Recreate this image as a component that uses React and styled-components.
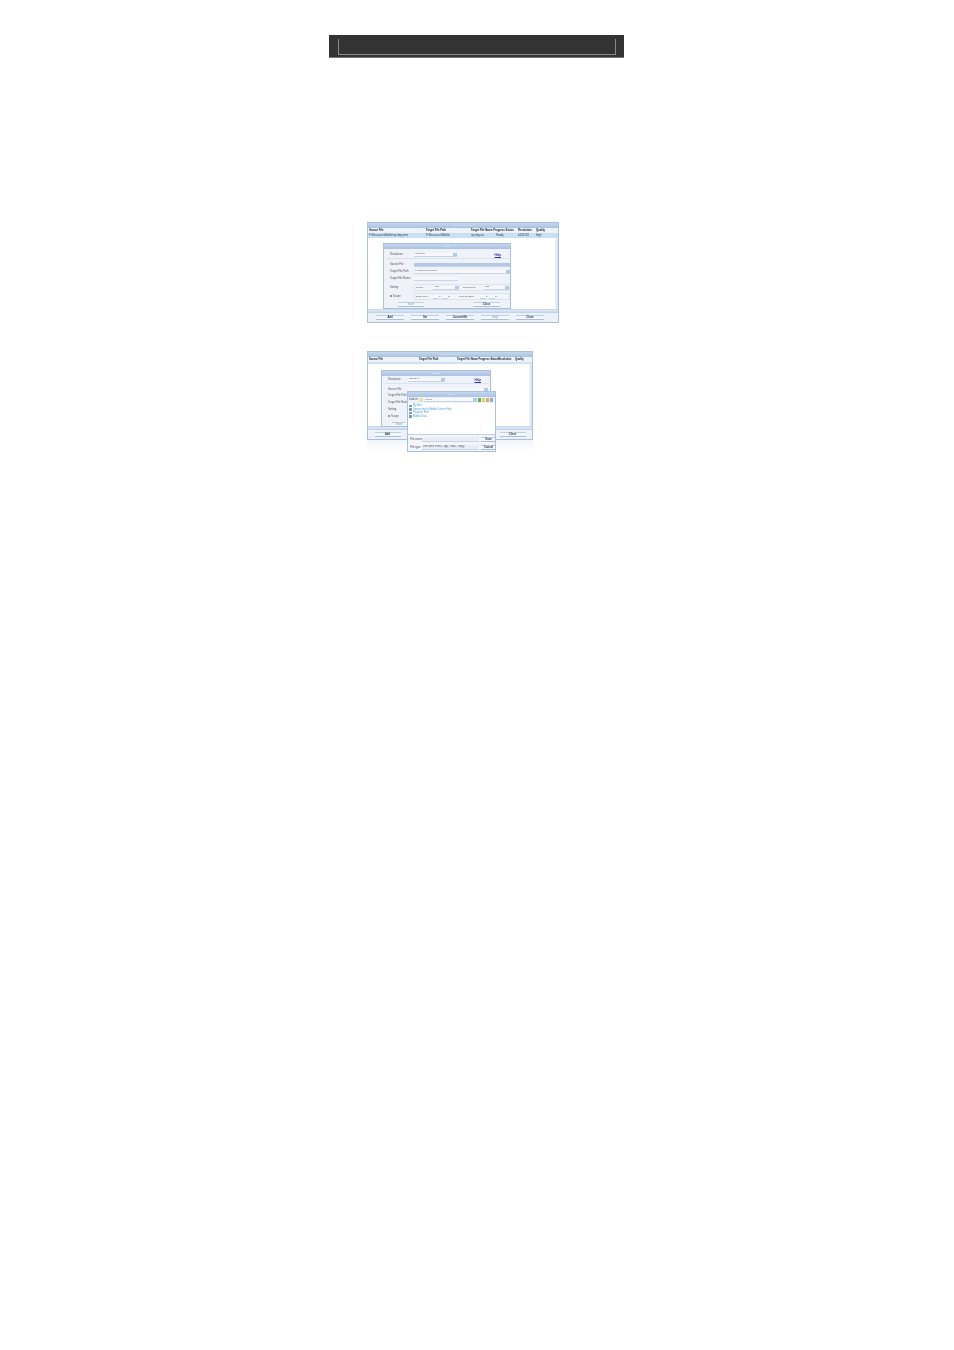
import React from "react";
import styled, { createGlobalStyle } from "styled-components";

const Global = createGlobalStyle`
  html, body { margin: 0; padding: 0; background: #fff; }
  body { font-family: "Liberation Sans", Arial, sans-serif; }
`;

const Page = styled.div`
  width: 954px;
  height: 1350px;
  padding-top: 35px;
  box-sizing: border-box;
  overflow: hidden;
`;

const Banner = styled.div`
  width: 295px;
  height: 23px;
  margin-left: 329px;
  padding: 4px 8px 4px 9px;
  box-sizing: border-box;
  background: #333;
  border-bottom: 1px solid #777;
`;

const BannerFrame = styled.div`
  height: 15px;
  border: 1px solid #8a8a8a;
  border-top: 0;
`;

const Shot = styled.figure`
  position: relative;
  margin: ${(p) => p.$top}px 0 0 367px;
  width: ${(p) => p.$w}px;
  height: ${(p) => p.$h}px;
  filter: blur(0.4px);
`;

const Win = styled.div`
  display: flex;
  flex-direction: column;
  width: ${(p) => p.$w}px;
  height: ${(p) => p.$h}px;
  box-sizing: border-box;
  background: #e9eff7;
  border: 1px solid #a9c0de;
  color: #334;
  font-size: 3px;
  line-height: 4px;
  white-space: nowrap;
  overflow: hidden;
`;

const Title = styled.div`
  flex: none;
  height: 5px;
  background: linear-gradient(#c6d7ed, #a9c1e1);
  color: #e6eef8;
  font-size: 2.4px;
  line-height: 5px;
  text-align: center;
`;

const Header = styled.div`
  flex: none;
  display: grid;
  grid-template-columns: ${(p) => p.$cols};
  height: 5px;
  padding-left: 1px;
  background: #eef3fa;
  font-weight: 700;
  font-size: ${(p) => p.$size || 2.7}px;
  line-height: 5px;
  color: #223;
  overflow: hidden;
`;

const Row = styled(Header)`
  background: #c9e0f4;
  font-weight: 400;
  color: #345;
`;

const Stripe = styled.div`
  flex: none;
  height: 2px;
  background: #cfe3f5;
`;

const Body = styled.div`
  flex: 1;
  display: flex;
  justify-content: flex-end;
  background: #fff;
`;

const VScroll = styled.div`
  width: 3px;
  background: linear-gradient(90deg, #f4f7fb, #d3e0ef);
`;

const HScroll = styled.div`
  flex: none;
  height: 4px;
  background: linear-gradient(#e4ecf6, #b9cfe8);
  border-top: 1px solid #c8d7e9;
  box-sizing: border-box;
`;

const Footer = styled.div`
  flex: none;
  display: flex;
  justify-content: ${(p) => p.$justify || "flex-start"};
  align-items: center;
  gap: ${(p) => p.$gap || 0}px;
  height: 9px;
  padding: 0 ${(p) => p.$pad || 8}px;
  background: #edf2f9;
`;

const Btn = styled.div`
  flex: none;
  width: ${(p) => p.$w || 28}px;
  height: 5px;
  box-sizing: border-box;
  background: #f4f7fb;
  border-top: 1px solid #bdd0e8;
  border-bottom: 1px solid #a7c0e0;
  font-size: 2.7px;
  font-weight: 700;
  line-height: 3px;
  text-align: center;
  color: ${(p) => (p.$dim ? "#9db0c8" : "#334")};
`;

const Dialog = styled(Win)`
  position: absolute;
  left: ${(p) => p.$x}px;
  top: ${(p) => p.$y}px;
  background: #eff3f9;
`;

const Form = styled.div`
  flex: 1;
  display: flex;
  flex-direction: column;
  padding: ${(p) => p.$top || 3}px 1px 0 6px;
`;

const Line = styled.div`
  flex: none;
  display: flex;
  align-items: center;
  height: ${(p) => p.$h || 4}px;
  margin-bottom: ${(p) => p.$gap || 2}px;
`;

const Label = styled.span`
  flex: none;
  width: ${(p) => p.$w || 23}px;
  font-size: 2.7px;
  color: #556;
`;

const Field = styled.div`
  flex: none;
  display: flex;
  justify-content: space-between;
  align-items: center;
  width: ${(p) => p.$w}px;
  height: 4px;
  padding-left: 1px;
  box-sizing: border-box;
  background: ${(p) => p.$fill || "#f6f8fb"};
  border-bottom: 1px solid #c6d4e6;
  font-size: 2.5px;
  line-height: 4px;
  color: #556;
  overflow: hidden;
`;

const Caret = styled.i`
  flex: none;
  width: 4px;
  height: 4px;
  background: #b3c9e3;
`;

const Help = styled.span`
  margin-left: auto;
  margin-right: 8px;
  font-size: 3px;
  font-weight: 700;
  color: #33339a;
  text-decoration: underline;
  text-decoration-thickness: 0.3px;
`;

const Divider = styled.div`
  flex: none;
  height: 1px;
  background: #d9e3ef;
  margin: 0 0 4px -3px;
`;

const Group = styled.div`
  flex: none;
  display: flex;
  align-items: center;
  width: ${(p) => p.$w}px;
  height: 7px;
  padding-left: 1px;
  box-sizing: border-box;
  background: #f1f4f9;
  border: 1px solid #dbe3ee;
`;

const Check = styled.i`
  display: inline-block;
  width: 2px;
  height: 2px;
  margin-right: 1px;
  box-sizing: border-box;
  border: 0.5px solid #99a;
  background: #fff;
`;

const Spacer = styled.div`
  flex: none;
  width: ${(p) => p.$w}px;
`;

const DlgFoot = styled.div`
  flex: none;
  display: flex;
  justify-content: space-between;
  padding: 0 ${(p) => p.$right || 9}px 0 ${(p) => p.$left || 8}px;
`;

const Tiny = styled.span`
  flex: none;
  font-size: 2.4px;
  color: #556;
  margin-left: ${(p) => p.$ml || 0}px;
  width: ${(p) => (p.$w ? `${p.$w}px` : "auto")};
`;

const Look = styled.div`
  flex: none;
  display: flex;
  align-items: center;
  gap: 1px;
  height: 6px;
  padding: 0 1px;
  background: #edf2f9;
  font-size: 2.6px;
`;

const Folder = styled.i`
  flex: none;
  width: 4px;
  height: 4px;
  border-radius: 50%;
  background: #efe09a;
`;

const Tool = styled.i`
  flex: none;
  width: 3px;
  height: 4px;
  background: ${(p) => p.$c};
`;

const Files = styled.div`
  flex: 1;
  display: flex;
  flex-direction: column;
  padding: 1px 0 0 1px;
  background: #fff;
  border-bottom: 1px solid #bdd0e8;
`;

const FileRow = styled.div`
  display: flex;
  align-items: center;
  gap: 1px;
  height: 3.5px;
  font-size: 2.6px;
  line-height: 3.5px;
  color: #4a9ad8;
`;

const FileIcon = styled.i`
  flex: none;
  width: 3px;
  height: 2.5px;
  background: #7f9ab6;
`;

const OpenRow = styled.div`
  flex: none;
  display: flex;
  align-items: center;
  height: 8px;
  padding: 0 1px 0 2px;
  background: #f3f6fa;
`;

const OpenLabel = styled(Tiny)`
  font-size: 2.8px;
`;

const OpenField = styled(Field)`
  height: 5px;
  background: #e9eef5;
  font-size: 2.7px;
`;

const Fade = styled.div`
  height: 12px;
  background: linear-gradient(#f1f5fa, #fff);
`;

const cols1 = "57px 45px 47px 18px 1fr";
const cols2 = "50px 38px 41px 17px 1fr";

export default function App() {
  return (
    <Page>
      <Global />
      <Banner>
        <BannerFrame />
      </Banner>

      <Shot $top={164} $w={192} $h={101}>
        <Win $w={192} $h={101}>
          <Title>MP4 Converter Pro</Title>
          <Header $cols={cols1}>
            <span>Source File</span>
            <span>Target File Path</span>
            <span>Target File Name Progress Status</span>
            <span>Resolution</span>
            <span>Quality</span>
          </Header>
          <Row $cols={cols1}>
            <span>F:\Resource\Mobile\my dog.wmv</span>
            <span>F:\Resource\Mobile\</span>
            <span>my dog.avi&nbsp;&nbsp;&nbsp;&nbsp;&nbsp;&nbsp;&nbsp;&nbsp;&nbsp;&nbsp;&nbsp;&nbsp;&nbsp;&nbsp;&nbsp;&nbsp;Ready</span>
            <span>640X128</span>
            <span>High</span>
          </Row>
          <Body>
            <VScroll />
          </Body>
          <HScroll />
          <Footer $gap={7}>
            <Btn>Add</Btn>
            <Btn>Set</Btn>
            <Btn>Convert Me</Btn>
            <Btn $dim>Stop</Btn>
            <Btn>Close</Btn>
          </Footer>
        </Win>
        <Dialog $x={16} $y={21} $w={128} $h={66}>
          <Title>Setting</Title>
          <Form>
            <Line $h={5} $gap={1}>
              <Label $w={24}>Resolution</Label>
              <Field $w={43}>
                320X240
                <Caret />
              </Field>
              <Help>Help</Help>
            </Line>
            <Divider />
            <Line $gap={2.5}>
              <Label $w={24}>Source File</Label>
              <Field $w={96} $fill="#b3c9e6">
                <span />
                <Caret />
              </Field>
            </Line>
            <Line $gap={3.5}>
              <Label $w={24}>Target File Path</Label>
              <Field $w={96}>
                F:\Resource\Mobile\
                <Caret />
              </Field>
            </Line>
            <Line $gap={3}>
              <Label $w={24}>Target File Name</Label>
              <Field $w={44} />
            </Line>
            <Line $h={7} $gap={2}>
              <Label $w={24}>Setting</Label>
              <Group $w={96}>
                <Tiny $w={17}>Quality</Tiny>
                <Field $w={26}>
                  High
                  <Caret />
                </Field>
                <Tiny $ml={4} $w={21}>Sound Rate</Tiny>
                <Field $w={25}>
                  128
                  <Caret />
                </Field>
              </Group>
            </Line>
            <Line $h={7} $gap={2}>
              <Label $w={24}>
                <Check />
                Scope
              </Label>
              <Group $w={96}>
                <Tiny $w={17}>Begin from</Tiny>
                <Field $w={6} />
                <Tiny $w={3}>h</Tiny>
                <Field $w={6} />
                <Tiny $w={11}>m</Tiny>
                <Tiny $w={21}>Time Duration</Tiny>
                <Field $w={6} />
                <Tiny $w={3}>h</Tiny>
                <Field $w={6} />
                <Tiny>m</Tiny>
              </Group>
            </Line>
            <DlgFoot $left={8} $right={9}>
              <Btn $w={26} $dim>Save</Btn>
              <Btn $w={27}>Close</Btn>
            </DlgFoot>
          </Form>
        </Dialog>
      </Shot>

      <Shot $top={28} $w={166} $h={101}>
        <Win $w={166} $h={89}>
          <Title>MP4 Converter Pro</Title>
          <Header $cols={cols2} $size={2.6}>
            <span>Source File</span>
            <span>Target File Path</span>
            <span>Target File Name Progress Status</span>
            <span>Resolution</span>
            <span>Quality</span>
          </Header>
          <Stripe />
          <Body>
            <VScroll />
          </Body>
          <HScroll />
          <Footer $justify="space-between" $pad={6.5}>
            <Btn $w={26}>Add</Btn>
            <Btn $w={26}>Close</Btn>
          </Footer>
        </Win>
        <Fade />
        <Dialog $x={14} $y={19} $w={110} $h={57}>
          <Title>Setting</Title>
          <Form $top={1}>
            <Line $h={5} $gap={1}>
              <Label $w={20}>Resolution</Label>
              <Field $w={37}>
                320X240
                <Caret />
              </Field>
              <Help>Help</Help>
            </Line>
            <Divider />
            <Line $gap={2}>
              <Label $w={20}>Source File</Label>
              <Field $w={80}>
                <span />
                <Caret />
              </Field>
            </Line>
            <Line $gap={2.5}>
              <Label $w={20}>Target File Path</Label>
            </Line>
            <Line $gap={3.5}>
              <Label $w={20}>Target File Name</Label>
            </Line>
            <Line $gap={3}>
              <Label $w={20}>Setting</Label>
            </Line>
            <Line $gap={3}>
              <Label $w={20}>
                <Check />
                Scope
              </Label>
            </Line>
            <DlgFoot $left={4} $right={1}>
              <Btn $w={14} $dim>Save</Btn>
            </DlgFoot>
          </Form>
        </Dialog>
        <Dialog $x={40} $y={40} $w={89} $h={61}>
          <Title>Open</Title>
          <Look>
            Look in:
            <Folder />
            <Field $w={53}>
              Mobile
              <Caret />
            </Field>
            <Tool $c="#6aae5e" />
            <Tool $c="#e6d070" />
            <Tool $c="#dcae70" />
            <Tool $c="#90abcd" />
          </Look>
          <Files>
            <FileRow>
              <FileIcon />
              My files
            </FileRow>
            <FileRow>
              <FileIcon />
              Connected to Mobile Device Files
            </FileRow>
            <FileRow>
              <FileIcon />
              Program Files
            </FileRow>
            <FileRow>
              <FileIcon />
              Mobile Data
            </FileRow>
          </Files>
          <OpenRow>
            <OpenLabel $w={12}>File name</OpenLabel>
            <OpenField $w={57} />
            <Spacer $w={2} />
            <Btn $w={15}>Save</Btn>
          </OpenRow>
          <OpenRow>
            <OpenLabel $w={12}>File type</OpenLabel>
            <OpenField $w={57}>3GP,MP4 Files(*.3gp,*.mp4,*.mpg)</OpenField>
            <Spacer $w={2} />
            <Btn $w={15}>Cancel</Btn>
          </OpenRow>
        </Dialog>
      </Shot>
    </Page>
  );
}
